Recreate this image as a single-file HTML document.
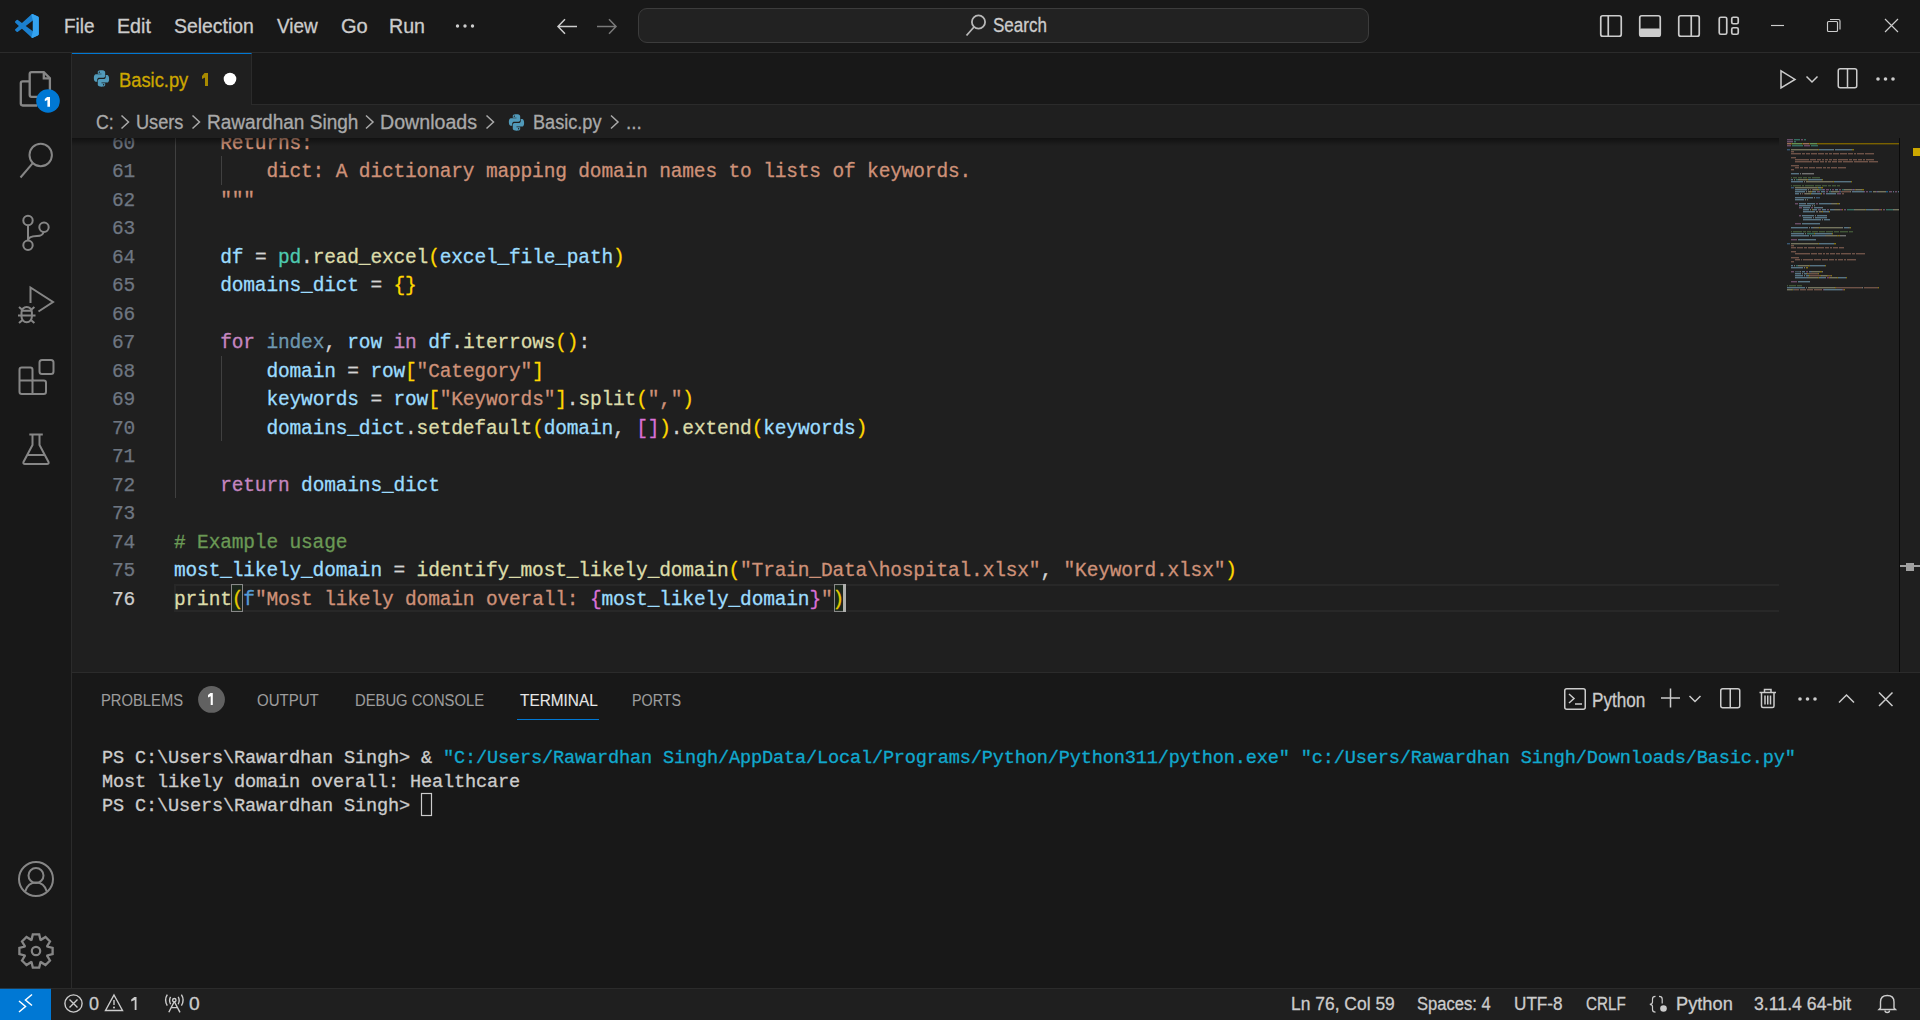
<!DOCTYPE html>
<html><head><meta charset="utf-8"><style>
*{box-sizing:border-box;margin:0;padding:0}
html,body{width:1920px;height:1020px;overflow:hidden;background:#181818}
body{position:relative;font-family:"Liberation Sans", sans-serif}
.abs{position:absolute}
.t{position:absolute;white-space:pre;line-height:1;font-family:"Liberation Sans", sans-serif;transform-origin:0 0;-webkit-text-stroke:0.3px currentColor}
.m{position:absolute;white-space:pre;line-height:normal;font-family:"Liberation Mono", monospace;-webkit-text-stroke:0.3px currentColor}
.ov{position:absolute;left:0;top:0}
#code{position:absolute;left:72px;top:138px;width:1827px;height:534px;overflow:hidden;background:#1F1F1F}
#code .ln{-webkit-text-stroke:0.3px currentColor;position:absolute;left:102px;height:28.5px;white-space:pre;font-family:"Liberation Mono", monospace;font-size:19.5px;letter-spacing:-0.15px;line-height:28.5px;margin-top:2.4px}
#code .num{-webkit-text-stroke:0.25px currentColor;position:absolute;left:0;width:63px;text-align:right;white-space:pre;font-family:"Liberation Mono", monospace;font-size:19.5px;letter-spacing:-0.15px;line-height:28.5px;margin-top:2.4px}
#mm{position:absolute;left:1787px;top:139px;width:112px;height:160px}
#mm i{position:absolute;height:2px;opacity:0.45}
</style></head><body>
<!-- title bar -->
<div class="abs" style="left:0;top:0;width:1920px;height:53px;background:#181818;border-bottom:1px solid #2B2B2B"></div>
<!-- activity bar -->
<div class="abs" style="left:0;top:53px;width:72px;height:935px;background:#181818;border-right:1px solid #2B2B2B"></div>
<!-- tabs bar -->
<div class="abs" style="left:72px;top:53px;width:1848px;height:52px;background:#181818;border-bottom:1px solid #2B2B2B"></div>
<div class="abs" style="left:72px;top:53px;width:180px;height:52px;background:#1F1F1F;border-right:1px solid #2B2B2B;border-top:1px solid #0078D4"></div>
<!-- breadcrumbs -->
<div class="abs" style="left:72px;top:105px;width:1848px;height:33px;background:#1F1F1F"></div>
<!-- editor -->
<div id="code">
 <div class="abs" style="left:102px;top:445.5px;width:1750px;height:28.5px;border:2px solid #282828"></div>
 <div class="abs" style="left:103px;top:0;width:1px;height:360px;background:#404040"></div>
 <div class="abs" style="left:149px;top:18px;width:1px;height:28.5px;background:#404040"></div>
 <div class="abs" style="left:149px;top:217.5px;width:1px;height:85.5px;background:#404040"></div>
 <div class="ln" style="top:-10.5px"><span style="color:#CE9178">    Returns:</span></div><div class="num" style="top:-10.5px;color:#6E7681">60</div><div class="ln" style="top:18.0px"><span style="color:#CE9178">        dict: A dictionary mapping domain names to lists of keywords.</span></div><div class="num" style="top:18.0px;color:#6E7681">61</div><div class="ln" style="top:46.5px"><span style="color:#CE9178">    """</span></div><div class="num" style="top:46.5px;color:#6E7681">62</div><div class="ln" style="top:75.0px"></div><div class="num" style="top:75.0px;color:#6E7681">63</div><div class="ln" style="top:103.5px"><span style="color:#D4D4D4">    </span><span style="color:#9CDCFE">df</span><span style="color:#D4D4D4"> = </span><span style="color:#4EC9B0">pd</span><span style="color:#D4D4D4">.</span><span style="color:#DCDCAA">read_excel</span><span style="color:#FFD700">(</span><span style="color:#9CDCFE">excel_file_path</span><span style="color:#FFD700">)</span></div><div class="num" style="top:103.5px;color:#6E7681">64</div><div class="ln" style="top:132.0px"><span style="color:#D4D4D4">    </span><span style="color:#9CDCFE">domains_dict</span><span style="color:#D4D4D4"> = </span><span style="color:#FFD700">{}</span></div><div class="num" style="top:132.0px;color:#6E7681">65</div><div class="ln" style="top:160.5px"></div><div class="num" style="top:160.5px;color:#6E7681">66</div><div class="ln" style="top:189.0px"><span style="color:#D4D4D4">    </span><span style="color:#C586C0">for</span><span style="color:#D4D4D4"> </span><span style="color:rgba(156,220,254,0.6)">index</span><span style="color:#D4D4D4">, </span><span style="color:#9CDCFE">row</span><span style="color:#D4D4D4"> </span><span style="color:#C586C0">in</span><span style="color:#D4D4D4"> </span><span style="color:#9CDCFE">df</span><span style="color:#D4D4D4">.</span><span style="color:#DCDCAA">iterrows</span><span style="color:#FFD700">()</span><span style="color:#D4D4D4">:</span></div><div class="num" style="top:189.0px;color:#6E7681">67</div><div class="ln" style="top:217.5px"><span style="color:#D4D4D4">        </span><span style="color:#9CDCFE">domain</span><span style="color:#D4D4D4"> = </span><span style="color:#9CDCFE">row</span><span style="color:#FFD700">[</span><span style="color:#CE9178">"Category"</span><span style="color:#FFD700">]</span></div><div class="num" style="top:217.5px;color:#6E7681">68</div><div class="ln" style="top:246.0px"><span style="color:#D4D4D4">        </span><span style="color:#9CDCFE">keywords</span><span style="color:#D4D4D4"> = </span><span style="color:#9CDCFE">row</span><span style="color:#FFD700">[</span><span style="color:#CE9178">"Keywords"</span><span style="color:#FFD700">]</span><span style="color:#D4D4D4">.</span><span style="color:#DCDCAA">split</span><span style="color:#FFD700">(</span><span style="color:#CE9178">","</span><span style="color:#FFD700">)</span></div><div class="num" style="top:246.0px;color:#6E7681">69</div><div class="ln" style="top:274.5px"><span style="color:#D4D4D4">        </span><span style="color:#9CDCFE">domains_dict</span><span style="color:#D4D4D4">.</span><span style="color:#DCDCAA">setdefault</span><span style="color:#FFD700">(</span><span style="color:#9CDCFE">domain</span><span style="color:#D4D4D4">, </span><span style="color:#DA70D6">[]</span><span style="color:#FFD700">)</span><span style="color:#D4D4D4">.</span><span style="color:#DCDCAA">extend</span><span style="color:#FFD700">(</span><span style="color:#9CDCFE">keywords</span><span style="color:#FFD700">)</span></div><div class="num" style="top:274.5px;color:#6E7681">70</div><div class="ln" style="top:303.0px"></div><div class="num" style="top:303.0px;color:#6E7681">71</div><div class="ln" style="top:331.5px"><span style="color:#D4D4D4">    </span><span style="color:#C586C0">return</span><span style="color:#D4D4D4"> </span><span style="color:#9CDCFE">domains_dict</span></div><div class="num" style="top:331.5px;color:#6E7681">72</div><div class="ln" style="top:360.0px"></div><div class="num" style="top:360.0px;color:#6E7681">73</div><div class="ln" style="top:388.5px"><span style="color:#6A9955"># Example usage</span></div><div class="num" style="top:388.5px;color:#6E7681">74</div><div class="ln" style="top:417.0px"><span style="color:#9CDCFE">most_likely_domain</span><span style="color:#D4D4D4"> = </span><span style="color:#DCDCAA">identify_most_likely_domain</span><span style="color:#FFD700">(</span><span style="color:#CE9178">"Train_Data\hospital.xlsx"</span><span style="color:#D4D4D4">, </span><span style="color:#CE9178">"Keyword.xlsx"</span><span style="color:#FFD700">)</span></div><div class="num" style="top:417.0px;color:#6E7681">75</div><div class="ln" style="top:445.5px"><span style="color:#DCDCAA">print</span><span style="color:#FFD700">(</span><span style="color:#569CD6">f</span><span style="color:#CE9178">"Most likely domain overall: </span><span style="color:#DA70D6">{</span><span style="color:#9CDCFE">most_likely_domain</span><span style="color:#DA70D6">}</span><span style="color:#CE9178">"</span><span style="color:#FFD700">)</span></div><div class="num" style="top:445.5px;color:#CCCCCC">76</div>
 <div class="abs" style="left:159px;top:446px;width:12px;height:27.5px;border:1px solid #888888;background:rgba(0,100,0,0.1)"></div>
 <div class="abs" style="left:761.5px;top:446px;width:12px;height:27.5px;border:1px solid #888888;background:rgba(0,100,0,0.1)"></div>
 <div class="abs" style="left:771px;top:446px;width:2.5px;height:27.5px;background:#AEAFAD"></div>
 <div class="abs" style="left:0;top:0;width:1707px;height:8px;background:linear-gradient(rgba(0,0,0,0.45),rgba(0,0,0,0))"></div>
 <div class="abs" style="left:1827px;top:0;width:1px;height:534px;background:#0A0A0A"></div>
</div>
<div class="abs" style="left:1899px;top:138px;width:1px;height:534px;background:#0A0A0A"></div>
<div class="abs" style="left:1900px;top:138px;width:20px;height:534px;background:#1F1F1F"></div>
<div class="abs" style="left:1913px;top:148px;width:7px;height:8px;background:#CCA700"></div>
<div class="abs" style="left:1900px;top:565px;width:20px;height:2px;background:#A0A0A0"></div>
<div class="abs" style="left:1906px;top:563px;width:8px;height:8px;background:#A0A0A0"></div>
<div class="abs" style="left:1779px;top:138px;width:120px;height:534px;background:#1F1F1F"></div>
<div id="mm">
 <div class="abs" style="left:0;top:3.5px;width:112px;height:2px;background:#7A6200"></div>
 <i style="left:0px;top:0px;width:6px;background:#C586C0"></i><i style="left:7px;top:0px;width:6px;background:#4EC9B0"></i><i style="left:14px;top:0px;width:2px;background:#C586C0"></i><i style="left:17px;top:0px;width:2px;background:#4EC9B0"></i><i style="left:0px;top:2px;width:6px;background:#C586C0"></i><i style="left:7px;top:2px;width:2px;background:#4EC9B0"></i><i style="left:0px;top:4px;width:4px;background:#C586C0"></i><i style="left:5px;top:4px;width:10px;background:#4EC9B0"></i><i style="left:16px;top:4px;width:6px;background:#C586C0"></i><i style="left:23px;top:4px;width:7px;background:#4EC9B0"></i><i style="left:0px;top:6px;width:4px;background:#C586C0"></i><i style="left:5px;top:6px;width:11px;background:#4EC9B0"></i><i style="left:17px;top:6px;width:6px;background:#C586C0"></i><i style="left:24px;top:6px;width:7px;background:#4EC9B0"></i><i style="left:0px;top:10px;width:3px;background:#569CD6"></i><i style="left:4px;top:10px;width:27px;background:#DCDCAA"></i><i style="left:31px;top:10px;width:1px;background:#FFD700"></i><i style="left:32px;top:10px;width:14px;background:#9CDCFE"></i><i style="left:46px;top:10px;width:1px;background:#D4D4D4"></i><i style="left:48px;top:10px;width:17px;background:#9CDCFE"></i><i style="left:65px;top:10px;width:2px;background:#FFD700"></i><i style="left:4px;top:12px;width:3px;background:#CE9178"></i><i style="left:4px;top:14px;width:10px;background:#CE9178"></i><i style="left:15px;top:14px;width:3px;background:#CE9178"></i><i style="left:19px;top:14px;width:4px;background:#CE9178"></i><i style="left:24px;top:14px;width:6px;background:#CE9178"></i><i style="left:31px;top:14px;width:6px;background:#CE9178"></i><i style="left:38px;top:14px;width:3px;background:#CE9178"></i><i style="left:42px;top:14px;width:3px;background:#CE9178"></i><i style="left:46px;top:14px;width:6px;background:#CE9178"></i><i style="left:53px;top:14px;width:7px;background:#CE9178"></i><i style="left:61px;top:14px;width:5px;background:#CE9178"></i><i style="left:67px;top:14px;width:2px;background:#CE9178"></i><i style="left:70px;top:14px;width:7px;background:#CE9178"></i><i style="left:78px;top:14px;width:9px;background:#CE9178"></i><i style="left:4px;top:18px;width:5px;background:#CE9178"></i><i style="left:8px;top:20px;width:14px;background:#CE9178"></i><i style="left:23px;top:20px;width:6px;background:#CE9178"></i><i style="left:30px;top:20px;width:4px;background:#CE9178"></i><i style="left:35px;top:20px;width:2px;background:#CE9178"></i><i style="left:38px;top:20px;width:3px;background:#CE9178"></i><i style="left:42px;top:20px;width:3px;background:#CE9178"></i><i style="left:46px;top:20px;width:4px;background:#CE9178"></i><i style="left:51px;top:20px;width:10px;background:#CE9178"></i><i style="left:62px;top:20px;width:3px;background:#CE9178"></i><i style="left:66px;top:20px;width:4px;background:#CE9178"></i><i style="left:71px;top:20px;width:4px;background:#CE9178"></i><i style="left:76px;top:20px;width:2px;background:#CE9178"></i><i style="left:79px;top:20px;width:8px;background:#CE9178"></i><i style="left:8px;top:22px;width:17px;background:#CE9178"></i><i style="left:26px;top:22px;width:6px;background:#CE9178"></i><i style="left:33px;top:22px;width:4px;background:#CE9178"></i><i style="left:38px;top:22px;width:2px;background:#CE9178"></i><i style="left:41px;top:22px;width:3px;background:#CE9178"></i><i style="left:45px;top:22px;width:5px;background:#CE9178"></i><i style="left:51px;top:22px;width:4px;background:#CE9178"></i><i style="left:56px;top:22px;width:10px;background:#CE9178"></i><i style="left:67px;top:22px;width:14px;background:#CE9178"></i><i style="left:82px;top:22px;width:9px;background:#CE9178"></i><i style="left:4px;top:26px;width:8px;background:#CE9178"></i><i style="left:8px;top:28px;width:4px;background:#CE9178"></i><i style="left:13px;top:28px;width:3px;background:#CE9178"></i><i style="left:17px;top:28px;width:4px;background:#CE9178"></i><i style="left:22px;top:28px;width:6px;background:#CE9178"></i><i style="left:29px;top:28px;width:6px;background:#CE9178"></i><i style="left:36px;top:28px;width:3px;background:#CE9178"></i><i style="left:40px;top:28px;width:3px;background:#CE9178"></i><i style="left:44px;top:28px;width:6px;background:#CE9178"></i><i style="left:51px;top:28px;width:8px;background:#CE9178"></i><i style="left:4px;top:30px;width:3px;background:#CE9178"></i><i style="left:4px;top:34px;width:8px;background:#9CDCFE"></i><i style="left:13px;top:34px;width:1px;background:#D4D4D4"></i><i style="left:15px;top:34px;width:12px;background:#D4D4D4"></i><i style="left:4px;top:38px;width:1px;background:#6A9955"></i><i style="left:6px;top:38px;width:4px;background:#6A9955"></i><i style="left:11px;top:38px;width:4px;background:#6A9955"></i><i style="left:16px;top:38px;width:4px;background:#6A9955"></i><i style="left:21px;top:38px;width:3px;background:#6A9955"></i><i style="left:25px;top:38px;width:8px;background:#6A9955"></i><i style="left:4px;top:40px;width:2px;background:#9CDCFE"></i><i style="left:7px;top:40px;width:1px;background:#D4D4D4"></i><i style="left:9px;top:40px;width:2px;background:#4EC9B0"></i><i style="left:11px;top:40px;width:1px;background:#D4D4D4"></i><i style="left:12px;top:40px;width:8px;background:#DCDCAA"></i><i style="left:20px;top:40px;width:1px;background:#FFD700"></i><i style="left:21px;top:40px;width:14px;background:#9CDCFE"></i><i style="left:35px;top:40px;width:1px;background:#FFD700"></i><i style="left:4px;top:42px;width:12px;background:#9CDCFE"></i><i style="left:17px;top:42px;width:1px;background:#D4D4D4"></i><i style="left:19px;top:42px;width:27px;background:#DCDCAA"></i><i style="left:46px;top:42px;width:1px;background:#FFD700"></i><i style="left:47px;top:42px;width:17px;background:#9CDCFE"></i><i style="left:64px;top:42px;width:1px;background:#FFD700"></i><i style="left:4px;top:46px;width:1px;background:#6A9955"></i><i style="left:6px;top:46px;width:8px;background:#6A9955"></i><i style="left:15px;top:46px;width:2px;background:#6A9955"></i><i style="left:18px;top:46px;width:9px;background:#6A9955"></i><i style="left:28px;top:46px;width:6px;background:#6A9955"></i><i style="left:35px;top:46px;width:5px;background:#6A9955"></i><i style="left:41px;top:46px;width:3px;background:#6A9955"></i><i style="left:45px;top:46px;width:4px;background:#6A9955"></i><i style="left:50px;top:46px;width:3px;background:#6A9955"></i><i style="left:4px;top:48px;width:3px;background:#569CD6"></i><i style="left:8px;top:48px;width:22px;background:#DCDCAA"></i><i style="left:30px;top:48px;width:1px;background:#FFD700"></i><i style="left:31px;top:48px;width:3px;background:#9CDCFE"></i><i style="left:34px;top:48px;width:2px;background:#FFD700"></i><i style="left:8px;top:50px;width:12px;background:#9CDCFE"></i><i style="left:21px;top:50px;width:1px;background:#D4D4D4"></i><i style="left:23px;top:50px;width:1px;background:#CE9178"></i><i style="left:25px;top:50px;width:1px;background:#CE9178"></i><i style="left:26px;top:50px;width:1px;background:#D4D4D4"></i><i style="left:27px;top:50px;width:4px;background:#DCDCAA"></i><i style="left:31px;top:50px;width:1px;background:#FFD700"></i><i style="left:32px;top:50px;width:3px;background:#4EC9B0"></i><i style="left:35px;top:50px;width:1px;background:#DA70D6"></i><i style="left:36px;top:50px;width:1px;background:#9CDCFE"></i><i style="left:37px;top:50px;width:1px;background:#DA70D6"></i><i style="left:39px;top:50px;width:3px;background:#C586C0"></i><i style="left:43px;top:50px;width:1px;background:#9CDCFE"></i><i style="left:45px;top:50px;width:2px;background:#C586C0"></i><i style="left:48px;top:50px;width:3px;background:#9CDCFE"></i><i style="left:52px;top:50px;width:2px;background:#C586C0"></i><i style="left:55px;top:50px;width:2px;background:#4EC9B0"></i><i style="left:57px;top:50px;width:1px;background:#D4D4D4"></i><i style="left:58px;top:50px;width:7px;background:#DCDCAA"></i><i style="left:65px;top:50px;width:1px;background:#DA70D6"></i><i style="left:66px;top:50px;width:1px;background:#9CDCFE"></i><i style="left:67px;top:50px;width:1px;background:#DA70D6"></i><i style="left:68px;top:50px;width:1px;background:#FFD700"></i><i style="left:69px;top:50px;width:1px;background:#D4D4D4"></i><i style="left:70px;top:50px;width:5px;background:#DCDCAA"></i><i style="left:75px;top:50px;width:2px;background:#FFD700"></i><i style="left:8px;top:52px;width:10px;background:#9CDCFE"></i><i style="left:19px;top:52px;width:1px;background:#D4D4D4"></i><i style="left:21px;top:52px;width:3px;background:#DCDCAA"></i><i style="left:24px;top:52px;width:1px;background:#FFD700"></i><i style="left:25px;top:52px;width:4px;background:#9CDCFE"></i><i style="left:30px;top:52px;width:3px;background:#C586C0"></i><i style="left:34px;top:52px;width:4px;background:#9CDCFE"></i><i style="left:39px;top:52px;width:2px;background:#C586C0"></i><i style="left:42px;top:52px;width:2px;background:#4EC9B0"></i><i style="left:44px;top:52px;width:1px;background:#D4D4D4"></i><i style="left:45px;top:52px;width:7px;background:#DCDCAA"></i><i style="left:52px;top:52px;width:1px;background:#DA70D6"></i><i style="left:53px;top:52px;width:1px;background:#569CD6"></i><i style="left:54px;top:52px;width:9px;background:#CE9178"></i><i style="left:63px;top:52px;width:1px;background:#D4D4D4"></i><i style="left:65px;top:52px;width:12px;background:#9CDCFE"></i><i style="left:77px;top:52px;width:1px;background:#DA70D6"></i><i style="left:79px;top:52px;width:2px;background:#C586C0"></i><i style="left:82px;top:52px;width:3px;background:#569CD6"></i><i style="left:86px;top:52px;width:3px;background:#DCDCAA"></i><i style="left:89px;top:52px;width:1px;background:#DA70D6"></i><i style="left:90px;top:52px;width:1px;background:#9CDCFE"></i><i style="left:91px;top:52px;width:1px;background:#D4D4D4"></i><i style="left:92px;top:52px;width:7px;background:#DCDCAA"></i><i style="left:99px;top:52px;width:2px;background:#179FFF"></i><i style="left:102px;top:52px;width:3px;background:#C586C0"></i><i style="left:106px;top:52px;width:1px;background:#9CDCFE"></i><i style="left:108px;top:52px;width:2px;background:#C586C0"></i><i style="left:111px;top:52px;width:1px;background:#9CDCFE"></i><i style="left:8px;top:54px;width:4px;background:#9CDCFE"></i><i style="left:13px;top:54px;width:1px;background:#D4D4D4"></i><i style="left:15px;top:54px;width:1px;background:#CE9178"></i><i style="left:17px;top:54px;width:1px;background:#CE9178"></i><i style="left:18px;top:54px;width:1px;background:#D4D4D4"></i><i style="left:19px;top:54px;width:4px;background:#DCDCAA"></i><i style="left:23px;top:54px;width:1px;background:#FFD700"></i><i style="left:24px;top:54px;width:10px;background:#9CDCFE"></i><i style="left:34px;top:54px;width:1px;background:#FFD700"></i><i style="left:36px;top:54px;width:2px;background:#C586C0"></i><i style="left:39px;top:54px;width:10px;background:#9CDCFE"></i><i style="left:50px;top:54px;width:4px;background:#C586C0"></i><i style="left:55px;top:54px;width:2px;background:#CE9178"></i><i style="left:8px;top:58px;width:18px;background:#9CDCFE"></i><i style="left:27px;top:58px;width:1px;background:#D4D4D4"></i><i style="left:29px;top:58px;width:4px;background:#569CD6"></i><i style="left:8px;top:60px;width:9px;background:#9CDCFE"></i><i style="left:18px;top:60px;width:1px;background:#D4D4D4"></i><i style="left:20px;top:60px;width:1px;background:#B5CEA8"></i><i style="left:8px;top:64px;width:3px;background:#C586C0"></i><i style="left:12px;top:64px;width:6px;background:#9CDCFE"></i><i style="left:18px;top:64px;width:1px;background:#D4D4D4"></i><i style="left:20px;top:64px;width:8px;background:#9CDCFE"></i><i style="left:29px;top:64px;width:2px;background:#C586C0"></i><i style="left:32px;top:64px;width:12px;background:#9CDCFE"></i><i style="left:44px;top:64px;width:1px;background:#D4D4D4"></i><i style="left:45px;top:64px;width:5px;background:#DCDCAA"></i><i style="left:50px;top:64px;width:2px;background:#FFD700"></i><i style="left:52px;top:64px;width:1px;background:#D4D4D4"></i><i style="left:12px;top:66px;width:12px;background:#9CDCFE"></i><i style="left:25px;top:66px;width:1px;background:#D4D4D4"></i><i style="left:27px;top:66px;width:1px;background:#B5CEA8"></i><i style="left:12px;top:68px;width:3px;background:#C586C0"></i><i style="left:16px;top:68px;width:7px;background:#9CDCFE"></i><i style="left:24px;top:68px;width:2px;background:#C586C0"></i><i style="left:27px;top:68px;width:8px;background:#9CDCFE"></i><i style="left:35px;top:68px;width:1px;background:#D4D4D4"></i><i style="left:16px;top:70px;width:6px;background:#9CDCFE"></i><i style="left:23px;top:70px;width:1px;background:#D4D4D4"></i><i style="left:25px;top:70px;width:1px;background:#FFD700"></i><i style="left:26px;top:70px;width:4px;background:#9CDCFE"></i><i style="left:31px;top:70px;width:3px;background:#C586C0"></i><i style="left:35px;top:70px;width:4px;background:#9CDCFE"></i><i style="left:40px;top:70px;width:2px;background:#C586C0"></i><i style="left:43px;top:70px;width:4px;background:#9CDCFE"></i><i style="left:47px;top:70px;width:1px;background:#D4D4D4"></i><i style="left:48px;top:70px;width:5px;background:#DCDCAA"></i><i style="left:53px;top:70px;width:2px;background:#DA70D6"></i><i style="left:55px;top:70px;width:1px;background:#FFD700"></i><i style="left:57px;top:70px;width:2px;background:#C586C0"></i><i style="left:60px;top:70px;width:7px;background:#4EC9B0"></i><i style="left:67px;top:70px;width:1px;background:#D4D4D4"></i><i style="left:68px;top:70px;width:10px;background:#DCDCAA"></i><i style="left:78px;top:70px;width:1px;background:#FFD700"></i><i style="left:79px;top:70px;width:7px;background:#9CDCFE"></i><i style="left:86px;top:70px;width:1px;background:#D4D4D4"></i><i style="left:87px;top:70px;width:5px;background:#DCDCAA"></i><i style="left:92px;top:70px;width:2px;background:#DA70D6"></i><i style="left:94px;top:70px;width:1px;background:#FFD700"></i><i style="left:96px;top:70px;width:2px;background:#C586C0"></i><i style="left:99px;top:70px;width:7px;background:#4EC9B0"></i><i style="left:106px;top:70px;width:1px;background:#D4D4D4"></i><i style="left:107px;top:70px;width:5px;background:#DCDCAA"></i><i style="left:16px;top:72px;width:12px;background:#9CDCFE"></i><i style="left:29px;top:72px;width:2px;background:#D4D4D4"></i><i style="left:32px;top:72px;width:3px;background:#DCDCAA"></i><i style="left:35px;top:72px;width:1px;background:#FFD700"></i><i style="left:36px;top:72px;width:6px;background:#9CDCFE"></i><i style="left:42px;top:72px;width:1px;background:#FFD700"></i><i style="left:12px;top:76px;width:2px;background:#C586C0"></i><i style="left:15px;top:76px;width:12px;background:#9CDCFE"></i><i style="left:28px;top:76px;width:1px;background:#D4D4D4"></i><i style="left:30px;top:76px;width:9px;background:#9CDCFE"></i><i style="left:39px;top:76px;width:1px;background:#D4D4D4"></i><i style="left:16px;top:78px;width:9px;background:#9CDCFE"></i><i style="left:26px;top:78px;width:1px;background:#D4D4D4"></i><i style="left:28px;top:78px;width:12px;background:#9CDCFE"></i><i style="left:16px;top:80px;width:18px;background:#9CDCFE"></i><i style="left:35px;top:80px;width:1px;background:#D4D4D4"></i><i style="left:37px;top:80px;width:6px;background:#9CDCFE"></i><i style="left:8px;top:84px;width:6px;background:#C586C0"></i><i style="left:15px;top:84px;width:18px;background:#9CDCFE"></i><i style="left:4px;top:88px;width:17px;background:#9CDCFE"></i><i style="left:22px;top:88px;width:1px;background:#D4D4D4"></i><i style="left:24px;top:88px;width:2px;background:#9CDCFE"></i><i style="left:26px;top:88px;width:1px;background:#D4D4D4"></i><i style="left:27px;top:88px;width:5px;background:#DCDCAA"></i><i style="left:32px;top:88px;width:1px;background:#FFD700"></i><i style="left:33px;top:88px;width:22px;background:#DCDCAA"></i><i style="left:55px;top:88px;width:1px;background:#D4D4D4"></i><i style="left:57px;top:88px;width:4px;background:#9CDCFE"></i><i style="left:61px;top:88px;width:1px;background:#D4D4D4"></i><i style="left:62px;top:88px;width:1px;background:#B5CEA8"></i><i style="left:63px;top:88px;width:1px;background:#FFD700"></i><i style="left:4px;top:92px;width:1px;background:#6A9955"></i><i style="left:6px;top:92px;width:9px;background:#6A9955"></i><i style="left:16px;top:92px;width:3px;background:#6A9955"></i><i style="left:20px;top:92px;width:4px;background:#6A9955"></i><i style="left:25px;top:92px;width:6px;background:#6A9955"></i><i style="left:32px;top:92px;width:6px;background:#6A9955"></i><i style="left:39px;top:92px;width:7px;background:#6A9955"></i><i style="left:47px;top:92px;width:5px;background:#6A9955"></i><i style="left:53px;top:92px;width:8px;background:#6A9955"></i><i style="left:62px;top:92px;width:4px;background:#6A9955"></i><i style="left:4px;top:94px;width:13px;background:#9CDCFE"></i><i style="left:18px;top:94px;width:1px;background:#D4D4D4"></i><i style="left:20px;top:94px;width:7px;background:#4EC9B0"></i><i style="left:27px;top:94px;width:1px;background:#FFD700"></i><i style="left:28px;top:94px;width:17px;background:#9CDCFE"></i><i style="left:45px;top:94px;width:1px;background:#FFD700"></i><i style="left:4px;top:96px;width:18px;background:#9CDCFE"></i><i style="left:23px;top:96px;width:1px;background:#D4D4D4"></i><i style="left:25px;top:96px;width:13px;background:#9CDCFE"></i><i style="left:38px;top:96px;width:1px;background:#D4D4D4"></i><i style="left:39px;top:96px;width:11px;background:#DCDCAA"></i><i style="left:50px;top:96px;width:1px;background:#FFD700"></i><i style="left:51px;top:96px;width:1px;background:#B5CEA8"></i><i style="left:52px;top:96px;width:1px;background:#FFD700"></i><i style="left:53px;top:96px;width:6px;background:#D4D4D4"></i><i style="left:4px;top:100px;width:6px;background:#C586C0"></i><i style="left:11px;top:100px;width:18px;background:#9CDCFE"></i><i style="left:0px;top:104px;width:3px;background:#569CD6"></i><i style="left:4px;top:104px;width:27px;background:#DCDCAA"></i><i style="left:31px;top:104px;width:1px;background:#FFD700"></i><i style="left:32px;top:104px;width:15px;background:#9CDCFE"></i><i style="left:47px;top:104px;width:2px;background:#FFD700"></i><i style="left:4px;top:106px;width:3px;background:#CE9178"></i><i style="left:4px;top:108px;width:5px;background:#CE9178"></i><i style="left:10px;top:108px;width:6px;background:#CE9178"></i><i style="left:17px;top:108px;width:3px;background:#CE9178"></i><i style="left:21px;top:108px;width:7px;background:#CE9178"></i><i style="left:29px;top:108px;width:8px;background:#CE9178"></i><i style="left:38px;top:108px;width:4px;background:#CE9178"></i><i style="left:43px;top:108px;width:2px;background:#CE9178"></i><i style="left:46px;top:108px;width:5px;background:#CE9178"></i><i style="left:52px;top:108px;width:5px;background:#CE9178"></i><i style="left:4px;top:112px;width:5px;background:#CE9178"></i><i style="left:8px;top:114px;width:15px;background:#CE9178"></i><i style="left:24px;top:114px;width:6px;background:#CE9178"></i><i style="left:31px;top:114px;width:4px;background:#CE9178"></i><i style="left:36px;top:114px;width:2px;background:#CE9178"></i><i style="left:39px;top:114px;width:3px;background:#CE9178"></i><i style="left:43px;top:114px;width:5px;background:#CE9178"></i><i style="left:49px;top:114px;width:4px;background:#CE9178"></i><i style="left:54px;top:114px;width:10px;background:#CE9178"></i><i style="left:65px;top:114px;width:3px;background:#CE9178"></i><i style="left:69px;top:114px;width:9px;background:#CE9178"></i><i style="left:4px;top:118px;width:8px;background:#CE9178"></i><i style="left:8px;top:120px;width:5px;background:#CE9178"></i><i style="left:14px;top:120px;width:1px;background:#CE9178"></i><i style="left:16px;top:120px;width:10px;background:#CE9178"></i><i style="left:27px;top:120px;width:7px;background:#CE9178"></i><i style="left:35px;top:120px;width:6px;background:#CE9178"></i><i style="left:42px;top:120px;width:5px;background:#CE9178"></i><i style="left:48px;top:120px;width:2px;background:#CE9178"></i><i style="left:51px;top:120px;width:5px;background:#CE9178"></i><i style="left:57px;top:120px;width:2px;background:#CE9178"></i><i style="left:60px;top:120px;width:9px;background:#CE9178"></i><i style="left:4px;top:122px;width:3px;background:#CE9178"></i><i style="left:4px;top:126px;width:2px;background:#9CDCFE"></i><i style="left:7px;top:126px;width:1px;background:#D4D4D4"></i><i style="left:9px;top:126px;width:2px;background:#4EC9B0"></i><i style="left:11px;top:126px;width:1px;background:#D4D4D4"></i><i style="left:12px;top:126px;width:10px;background:#DCDCAA"></i><i style="left:22px;top:126px;width:1px;background:#FFD700"></i><i style="left:23px;top:126px;width:15px;background:#9CDCFE"></i><i style="left:38px;top:126px;width:1px;background:#FFD700"></i><i style="left:4px;top:128px;width:12px;background:#9CDCFE"></i><i style="left:17px;top:128px;width:1px;background:#D4D4D4"></i><i style="left:19px;top:128px;width:2px;background:#FFD700"></i><i style="left:4px;top:132px;width:3px;background:#C586C0"></i><i style="left:8px;top:132px;width:5px;background:rgba(156,220,254,0.6)"></i><i style="left:13px;top:132px;width:1px;background:#D4D4D4"></i><i style="left:15px;top:132px;width:3px;background:#9CDCFE"></i><i style="left:19px;top:132px;width:2px;background:#C586C0"></i><i style="left:22px;top:132px;width:2px;background:#9CDCFE"></i><i style="left:24px;top:132px;width:1px;background:#D4D4D4"></i><i style="left:25px;top:132px;width:8px;background:#DCDCAA"></i><i style="left:33px;top:132px;width:2px;background:#FFD700"></i><i style="left:35px;top:132px;width:1px;background:#D4D4D4"></i><i style="left:8px;top:134px;width:6px;background:#9CDCFE"></i><i style="left:15px;top:134px;width:1px;background:#D4D4D4"></i><i style="left:17px;top:134px;width:3px;background:#9CDCFE"></i><i style="left:20px;top:134px;width:1px;background:#FFD700"></i><i style="left:21px;top:134px;width:10px;background:#CE9178"></i><i style="left:31px;top:134px;width:1px;background:#FFD700"></i><i style="left:8px;top:136px;width:8px;background:#9CDCFE"></i><i style="left:17px;top:136px;width:1px;background:#D4D4D4"></i><i style="left:19px;top:136px;width:3px;background:#9CDCFE"></i><i style="left:22px;top:136px;width:1px;background:#FFD700"></i><i style="left:23px;top:136px;width:10px;background:#CE9178"></i><i style="left:33px;top:136px;width:1px;background:#FFD700"></i><i style="left:34px;top:136px;width:1px;background:#D4D4D4"></i><i style="left:35px;top:136px;width:5px;background:#DCDCAA"></i><i style="left:40px;top:136px;width:1px;background:#FFD700"></i><i style="left:41px;top:136px;width:3px;background:#CE9178"></i><i style="left:44px;top:136px;width:1px;background:#FFD700"></i><i style="left:8px;top:138px;width:12px;background:#9CDCFE"></i><i style="left:20px;top:138px;width:1px;background:#D4D4D4"></i><i style="left:21px;top:138px;width:10px;background:#DCDCAA"></i><i style="left:31px;top:138px;width:1px;background:#FFD700"></i><i style="left:32px;top:138px;width:6px;background:#9CDCFE"></i><i style="left:38px;top:138px;width:1px;background:#D4D4D4"></i><i style="left:40px;top:138px;width:2px;background:#DA70D6"></i><i style="left:42px;top:138px;width:1px;background:#FFD700"></i><i style="left:43px;top:138px;width:1px;background:#D4D4D4"></i><i style="left:44px;top:138px;width:6px;background:#DCDCAA"></i><i style="left:50px;top:138px;width:1px;background:#FFD700"></i><i style="left:51px;top:138px;width:8px;background:#9CDCFE"></i><i style="left:59px;top:138px;width:1px;background:#FFD700"></i><i style="left:4px;top:142px;width:6px;background:#C586C0"></i><i style="left:11px;top:142px;width:12px;background:#9CDCFE"></i><i style="left:0px;top:146px;width:1px;background:#6A9955"></i><i style="left:2px;top:146px;width:7px;background:#6A9955"></i><i style="left:10px;top:146px;width:5px;background:#6A9955"></i><i style="left:0px;top:148px;width:18px;background:#9CDCFE"></i><i style="left:19px;top:148px;width:1px;background:#D4D4D4"></i><i style="left:21px;top:148px;width:27px;background:#DCDCAA"></i><i style="left:48px;top:148px;width:1px;background:#FFD700"></i><i style="left:49px;top:148px;width:26px;background:#CE9178"></i><i style="left:75px;top:148px;width:1px;background:#D4D4D4"></i><i style="left:77px;top:148px;width:14px;background:#CE9178"></i><i style="left:91px;top:148px;width:1px;background:#FFD700"></i><i style="left:0px;top:150px;width:5px;background:#DCDCAA"></i><i style="left:5px;top:150px;width:1px;background:#FFD700"></i><i style="left:6px;top:150px;width:1px;background:#569CD6"></i><i style="left:7px;top:150px;width:5px;background:#CE9178"></i><i style="left:13px;top:150px;width:6px;background:#CE9178"></i><i style="left:20px;top:150px;width:6px;background:#CE9178"></i><i style="left:27px;top:150px;width:8px;background:#CE9178"></i><i style="left:36px;top:150px;width:1px;background:#DA70D6"></i><i style="left:37px;top:150px;width:18px;background:#9CDCFE"></i><i style="left:55px;top:150px;width:1px;background:#DA70D6"></i><i style="left:56px;top:150px;width:1px;background:#CE9178"></i><i style="left:57px;top:150px;width:1px;background:#FFD700"></i>
 <div class="abs" style="left:0;top:0;width:112px;height:152px;background:repeating-linear-gradient(to bottom,rgba(31,31,31,0) 0 1px,rgba(31,31,31,0.6) 1px 2px)"></div>
</div>
<!-- panel -->
<div class="abs" style="left:72px;top:672px;width:1848px;height:316px;background:#181818;border-top:1px solid #2B2B2B"></div>
<div class="abs" style="left:517px;top:718.5px;width:82px;height:1.5px;background:#0078D4"></div>
<!-- status bar -->
<div class="abs" style="left:0;top:987.5px;width:1920px;height:32.5px;background:#1F1F1F;border-top:1.2px solid #2B2B2B"></div>

<svg class="ov" width="1920" height="1020" viewBox="0 0 1920 1020" fill="none" stroke-linecap="butt" stroke-linejoin="miter">
 <!-- VS Code logo -->
 <g transform="translate(15,14) scale(0.238)">
  <path fill="#1B80CF" d="M96.46 10.8 75.86.87a6.23 6.23 0 0 0-7.11 1.21L29.3 38.07 12.12 25a4.16 4.16 0 0 0-5.32.24L1.3 30.26a4.17 4.17 0 0 0 0 6.16L16.2 50 1.3 63.58a4.17 4.17 0 0 0 0 6.16l5.5 5a4.16 4.16 0 0 0 5.32.24l17.18-13.07 39.45 36a6.23 6.23 0 0 0 7.11 1.2l20.6-9.92a6.25 6.25 0 0 0 3.54-5.63V16.43a6.25 6.25 0 0 0-3.54-5.63zM75 72.7 45.1 50 75 27.3z"/>
  <path fill="#34A3F0" d="M75 27.3V72.7L68.75 98.8a6.23 6.23 0 0 0 7.11 1.2l20.6-9.92A6.25 6.25 0 0 0 100 84.45V16.43a6.25 6.25 0 0 0-3.54-5.63L75.86.87a6.23 6.23 0 0 0-7.11 1.21z"/>
 </g>
 <!-- menu dots -->
 <g fill="#CCCCCC"><circle cx="457.5" cy="26" r="1.7"/><circle cx="465" cy="26" r="1.7"/><circle cx="472.5" cy="26" r="1.7"/></g>
 <!-- nav arrows -->
 <path stroke="#CCCCCC" stroke-width="1.5" d="M558 26.5H577M565 19.2 558 26.5 565 33.8"/>
 <path stroke="#7A7A7A" stroke-width="1.5" d="M597 26.5H616M609 19.2 616 26.5 609 33.8"/>
 <!-- search box -->
 <rect x="638.5" y="8.5" width="730" height="34" rx="8.5" fill="#222222" stroke="#3C3C3C" stroke-width="1"/>
 <circle cx="978.5" cy="22" r="6.6" stroke="#B8B8B8" stroke-width="1.8"/>
 <path stroke="#B8B8B8" stroke-width="1.8" d="M974 27 966.5 35.5"/>
 <!-- layout icons -->
 <g stroke="#CCCCCC" stroke-width="1.7">
  <rect x="1600.75" y="15.75" width="20.5" height="20.5" rx="2"/><path d="M1608.25 16V36"/>
  <rect x="1639.75" y="15.75" width="20.5" height="20.5" rx="2"/>
  <rect x="1678.75" y="15.75" width="20.5" height="20.5" rx="2"/><path d="M1691.25 16V36"/>
  <rect x="1719.25" y="17.25" width="7.5" height="17" rx="1.5"/>
  <rect x="1731.75" y="17.25" width="6.5" height="6.5" rx="1.5"/>
  <rect x="1731.75" y="27.75" width="6.5" height="6.5" rx="1.5"/>
 </g>
 <rect x="1640" y="28.5" width="20" height="7.5" rx="1" fill="#CCCCCC"/>
 <!-- window controls -->
 <g stroke="#CCCCCC" stroke-width="1.15">
  <path d="M1771 25.5H1784"/>
  <rect x="1827.5" y="21.5" width="10" height="10" rx="1"/>
  <path d="M1830 19.5H1838.5Q1840 19.5 1840 21V29.5"/>
  <path d="M1885 19 1898 32M1898 19 1885 32"/>
 </g>

 <!-- Activity bar icons -->
 <g stroke="#868686" stroke-width="2">
  <!-- explorer -->
  <path stroke-width="2.3" d="M29.6 81.3H22.7Q20.8 81.3 20.8 83.2V103.6Q20.8 105.5 22.7 105.5H37"/>
  <path stroke-width="2.3" d="M31.6 72.2H43.8L49.9 78.3V96.8H31.6Q29.7 96.8 29.7 94.9V74.1Q29.7 72.2 31.6 72.2Z"/>
  <path stroke-width="2.3" d="M43.8 72.2V78.3H49.9"/>
  <!-- search -->
  <circle cx="40.7" cy="155" r="11.2"/>
  <path d="M33.2 162.6 20.5 177.5"/>
  <!-- scm -->
  <circle cx="28" cy="220.5" r="4.7"/>
  <circle cx="44" cy="227.3" r="4.7"/>
  <circle cx="28" cy="245.3" r="4.7"/>
  <path d="M28 225.2V240.6"/>
  <path d="M28 241C28 237 31 236 37 236C41 236 43.5 234 43.5 231.5"/>
  <!-- run & debug -->
  <path d="M30.5 303V287.5L53 302 38.5 311.5"/>
  <path d="M21.5 312.5A5.2 5.6 0 0 1 31.9 312.5V316.5A5.2 5.8 0 0 1 21.5 316.5Z"/>
  <path d="M21.8 310.8H31.6M18 315.5H35.5M19 307 22.2 309.8M34.4 307 31.2 309.8M19 323 22.2 320.2M34.4 323 31.2 320.2"/>
  <!-- extensions -->
  <path d="M21.8 367.5H30.2Q32.5 367.5 32.5 369.8V380.5H43.7Q46 380.5 46 382.8V391.7Q46 394 43.7 394H21.8Q19.5 394 19.5 391.7V369.8Q19.5 367.5 21.8 367.5Z"/>
  <path d="M19.5 380.5H32.5V394"/>
  <rect x="39.5" y="360" width="14" height="14" rx="2.5"/>
  <!-- testing -->
  <path d="M29.3 434.5H42.8M32.5 434.5V445L23.5 462Q22.8 464 25 464H47Q49.2 464 48.5 462L39.5 445V434.5M27.5 455H44.5"/>
  <!-- accounts -->
  <circle cx="36" cy="879" r="17"/>
  <circle cx="36" cy="875.5" r="7.5"/>
  <path d="M25.2 891.5C27 885.5 31 882.5 36 882.5S45 885.5 46.8 891.5"/>
 </g>
 <!-- gear -->
 <g transform="translate(36,951)">
  <path stroke="#868686" stroke-width="2.3" d="M-4.41 -11.37 L-3.19 -16.60 L3.19 -16.60 L4.41 -11.37 L4.92 -11.16 L9.48 -13.99 L13.99 -9.48 L11.16 -4.92 L11.37 -4.41 L16.60 -3.19 L16.60 3.19 L11.37 4.41 L11.16 4.92 L13.99 9.48 L9.48 13.99 L4.92 11.16 L4.41 11.37 L3.19 16.60 L-3.19 16.60 L-4.41 11.37 L-4.92 11.16 L-9.48 13.99 L-13.99 9.48 L-11.16 4.92 L-11.37 4.41 L-16.60 3.19 L-16.60 -3.19 L-11.37 -4.41 L-11.16 -4.92 L-13.99 -9.48 L-9.48 -13.99 L-4.92 -11.16Z"/>
  <circle r="4.2" stroke="#868686" stroke-width="2.2"/>
 </g>
 <!-- badge -->
 <circle cx="48" cy="101" r="11.8" fill="#0078D4"/>
 <path fill="#FFFFFF" d="M47.4 97H50V106.8H47.4V100.1L44.8 101.3V98.9L47.1 97Z"/>

 <!-- tab python icon -->
 <g transform="translate(93,70)"><path fill="#519ABA" d="M7.9 0.3C4.3 0.3 4.5 1.9 4.5 1.9V3.6H8V4.1H3.1S0.8 3.8 0.8 7.6C0.8 11.3 2.8 11.2 2.8 11.2H4V9.4S3.9 7.4 6 7.4H9.6S11.5 7.4 11.5 5.5V2.3S11.8 0.3 7.9 0.3ZM6 1.4A0.65 0.65 0 1 1 6 2.7 0.65 0.65 0 1 1 6 1.4Z" transform="scale(1.06)"/>
<path fill="#519ABA" d="M8.1 15.7C11.7 15.7 11.5 14.1 11.5 14.1V12.4H8V11.9H12.9S15.2 12.2 15.2 8.4C15.2 4.7 13.2 4.8 13.2 4.8H12V6.6S12.1 8.6 10 8.6H6.4S4.5 8.6 4.5 10.5V13.7S4.2 15.7 8.1 15.7ZM10 14.6A0.65 0.65 0 1 1 10 13.3 0.65 0.65 0 1 1 10 14.6Z" transform="scale(1.06)"/></g>
 <g transform="translate(508,114)"><path fill="#519ABA" d="M7.9 0.3C4.3 0.3 4.5 1.9 4.5 1.9V3.6H8V4.1H3.1S0.8 3.8 0.8 7.6C0.8 11.3 2.8 11.2 2.8 11.2H4V9.4S3.9 7.4 6 7.4H9.6S11.5 7.4 11.5 5.5V2.3S11.8 0.3 7.9 0.3ZM6 1.4A0.65 0.65 0 1 1 6 2.7 0.65 0.65 0 1 1 6 1.4Z" transform="scale(1.06)"/>
<path fill="#519ABA" d="M8.1 15.7C11.7 15.7 11.5 14.1 11.5 14.1V12.4H8V11.9H12.9S15.2 12.2 15.2 8.4C15.2 4.7 13.2 4.8 13.2 4.8H12V6.6S12.1 8.6 10 8.6H6.4S4.5 8.6 4.5 10.5V13.7S4.2 15.7 8.1 15.7ZM10 14.6A0.65 0.65 0 1 1 10 13.3 0.65 0.65 0 1 1 10 14.6Z" transform="scale(1.06)"/></g>
 <path fill="#A88A00" d="M205 73H208V86H205V77.4L202 78.9V75.9L204.6 73Z"/>
 <!-- dirty dot -->
 <circle cx="230" cy="79" r="6.3" fill="#FFFFFF"/>
 <!-- breadcrumb chevrons -->
 <g stroke="#A9A9A9" stroke-width="1.5">
  <path d="M121.5 115.5 128.5 122 121.5 128.5"/>
  <path d="M192.5 115.5 199.5 122 192.5 128.5"/>
  <path d="M366 115.5 373 122 366 128.5"/>
  <path d="M486.5 115.5 493.5 122 486.5 128.5"/>
  <path d="M611 115.5 618 122 611 128.5"/>
 </g>
 <!-- editor actions -->
 <g stroke="#CCCCCC" stroke-width="1.5">
  <path d="M1781 70.8V88L1795 79.4Z"/>
  <path d="M1806.5 76.5 1812 82 1817.5 76.5"/>
  <rect x="1838.25" y="68.75" width="18.5" height="19" rx="2"/><path d="M1847.5 69V88"/>
 </g>
 <g fill="#CCCCCC"><circle cx="1878" cy="79" r="1.8"/><circle cx="1885.5" cy="79" r="1.8"/><circle cx="1893" cy="79" r="1.8"/></g>

 <!-- panel actions -->
 <g stroke="#CCCCCC" stroke-width="1.5">
  <rect x="1564.75" y="688.75" width="20.5" height="20.5" rx="2"/>
  <path d="M1569 694 1574 698.5 1569 703M1575 704H1582"/>
  <path d="M1670.5 688.5V707.5M1661 698H1680"/>
  <path d="M1689.5 696 1695 701.5 1700.5 696"/>
  <rect x="1720.75" y="688.75" width="19" height="19" rx="2"/><path d="M1730.25 689V708"/>
  <path d="M1759.5 692.5H1776M1764.5 692.5V689.5H1771V692.5M1761.5 692.5V706Q1761.5 707.5 1763 707.5H1772.5Q1774 707.5 1774 706V692.5M1765 695.5V704.5M1767.75 695.5V704.5M1770.5 695.5V704.5"/>
  <path d="M1839 702.5 1846.5 695 1854 702.5"/>
  <path d="M1879 692.5 1892.5 706M1892.5 692.5 1879 706"/>
 </g>
 <g fill="#CCCCCC"><circle cx="1800" cy="699" r="1.8"/><circle cx="1807.5" cy="699" r="1.8"/><circle cx="1815" cy="699" r="1.8"/></g>
 <!-- problems badge -->
 <circle cx="211.5" cy="699.4" r="13.4" fill="#616161"/>
 <path fill="#FFFFFF" d="M210.7 693H212.8V704.9H210.7V696.2L208 697.4V695.1L210.4 693Z"/>
 <!-- terminal cursor -->
 <rect x="421.5" y="793.5" width="10" height="22" stroke="#CCCCCC" stroke-width="1.2"/>

 <!-- status bar -->
 <rect x="0" y="988.8" width="51" height="31.2" fill="#0078D4"/>
 <g stroke="#FFFFFF" stroke-width="1.5">
  <path d="M19 1001 25.5 1006.5 19 1012M32 994.5 25.5 1000 32 1005.5"/>
 </g>
 <g stroke="#CCCCCC" stroke-width="1.4">
  <circle cx="73.5" cy="1003.5" r="8.6"/>
  <path d="M69.5 999.5 77.5 1007.5M77.5 999.5 69.5 1007.5"/>
  <path d="M114 995 122.5 1010.5H105.5Z"/>
  <path d="M114 1000V1005"/>
  <path d="M174.3 1001.5 168.8 1012.3M174.3 1001.5 180 1012.3M171 1007.6H177.6"/>
  <path d="M170.6 996.8Q168.6 1000.3 170.6 1004.2M178.2 996.8Q180.2 1000.3 178.2 1004.2M167.3 994.6Q163.9 1000 167.3 1005.6M181.4 994.6Q184.8 1000 181.4 1005.6"/>
  <circle cx="174.3" cy="1000.2" r="1.7"/>
  <path stroke-width="1.2" d="M1655.5 996.3Q1652.5 996.3 1652.5 999V1002Q1652.5 1004.2 1649.8 1004.3Q1652.5 1004.4 1652.5 1006.6V1009.5Q1652.5 1012.2 1655.5 1012.2"/>
  <path stroke-width="1.2" d="M1659 996.3Q1662.2 996.3 1662.2 999V1003.5"/>
  <path d="M1880.5 1008V1002Q1880.5 995.5 1887.3 995.5Q1894 995.5 1894 1002V1008L1895.5 1009.5H1879Z"/>
  <path d="M1885 1010.5Q1885 1012.5 1887.3 1012.5Q1889.5 1012.5 1889.5 1010.5"/>
 </g>
 <circle cx="114" cy="1007.5" r="1" fill="#CCCCCC"/>
 <path fill="#CCCCCC" d="M134.7 997.1H136.5V1010H134.7V999.9L131.2 1001.4V999.4L134.3 997.1Z"/>
 <circle cx="1663.5" cy="1008.5" r="3.3" fill="#CCCCCC"/>
</svg>

<div class="t" style="left:64.03px;top:17.49px;font-size:19.5px;color:#CCCCCC;transform:scaleX(0.9690)">File</div>
<div class="t" style="left:116.96px;top:17.49px;font-size:19.5px;color:#CCCCCC;transform:scaleX(1.0079)">Edit</div>
<div class="t" style="left:173.83px;top:17.49px;font-size:19.5px;color:#CCCCCC;transform:scaleX(0.9958)">Selection</div>
<div class="t" style="left:276.88px;top:17.49px;font-size:19.5px;color:#CCCCCC;transform:scaleX(0.9733)">View</div>
<div class="t" style="left:340.87px;top:17.49px;font-size:19.5px;color:#CCCCCC;transform:scaleX(1.0280)">Go</div>
<div class="t" style="left:389.37px;top:17.49px;font-size:19.5px;color:#CCCCCC;transform:scaleX(1.0038)">Run</div>
<div class="t" style="left:992.98px;top:16.49px;font-size:19.5px;color:#CCCCCC;transform:scaleX(0.8745)">Search</div>
<div class="t" style="left:119.47px;top:71.49px;font-size:19.5px;color:#CCA700;transform:scaleX(0.9393)">Basic.py</div>
<div class="t" style="left:95.59px;top:113.29px;font-size:19.5px;color:#A9A9A9;transform:scaleX(0.9075)">C:</div>
<div class="t" style="left:136.30px;top:113.29px;font-size:19.5px;color:#A9A9A9;transform:scaleX(0.9316)">Users</div>
<div class="t" style="left:206.81px;top:113.29px;font-size:19.5px;color:#A9A9A9;transform:scaleX(0.9768)">Rawardhan Singh</div>
<div class="t" style="left:380.37px;top:113.29px;font-size:19.5px;color:#A9A9A9;transform:scaleX(1.0061)">Downloads</div>
<div class="t" style="left:533.49px;top:113.29px;font-size:19.5px;color:#A9A9A9;transform:scaleX(0.9289)">Basic.py</div>
<div class="t" style="left:625.90px;top:113.29px;font-size:19.5px;color:#A9A9A9;transform:scaleX(0.9725)">...</div>
<div class="t" style="left:101.39px;top:692.78px;font-size:16.8px;color:#9D9D9D;transform:scaleX(0.8803);-webkit-text-stroke:0.1px currentColor">PROBLEMS</div>
<div class="t" style="left:257.33px;top:692.78px;font-size:16.8px;color:#9D9D9D;transform:scaleX(0.8945);-webkit-text-stroke:0.1px currentColor">OUTPUT</div>
<div class="t" style="left:354.99px;top:692.78px;font-size:16.8px;color:#9D9D9D;transform:scaleX(0.8812);-webkit-text-stroke:0.1px currentColor">DEBUG CONSOLE</div>
<div class="t" style="left:519.96px;top:692.78px;font-size:16.8px;color:#E7E7E7;transform:scaleX(0.9158);-webkit-text-stroke:0.1px currentColor">TERMINAL</div>
<div class="t" style="left:631.83px;top:692.78px;font-size:16.8px;color:#9D9D9D;transform:scaleX(0.8523);-webkit-text-stroke:0.1px currentColor">PORTS</div>
<div class="t" style="left:1592.17px;top:690.99px;font-size:19.5px;color:#CCCCCC;transform:scaleX(0.8778)">Python</div>
<div class="t" style="left:88.66px;top:994.71px;font-size:18.3px;color:#CCCCCC;transform:scaleX(0.9829)">0</div>
<div class="t" style="left:188.81px;top:994.71px;font-size:18.3px;color:#CCCCCC;transform:scaleX(1.0514)">0</div>
<div class="t" style="left:1290.57px;top:994.71px;font-size:18.3px;color:#CCCCCC;transform:scaleX(0.9545)">Ln 76, Col 59</div>
<div class="t" style="left:1417.21px;top:994.71px;font-size:18.3px;color:#CCCCCC;transform:scaleX(0.9066)">Spaces: 4</div>
<div class="t" style="left:1514.01px;top:994.71px;font-size:18.3px;color:#CCCCCC;transform:scaleX(0.9374)">UTF-8</div>
<div class="t" style="left:1585.97px;top:994.71px;font-size:18.3px;color:#CCCCCC;transform:scaleX(0.8326)">CRLF</div>
<div class="t" style="left:1675.90px;top:994.71px;font-size:18.3px;color:#CCCCCC;transform:scaleX(0.9977)">Python</div>
<div class="t" style="left:1753.67px;top:994.71px;font-size:18.3px;color:#CCCCCC;transform:scaleX(0.9680)">3.11.4 64-bit</div>
<div class="m" style="left:102px;top:747.52px;font-size:18.6px;letter-spacing:-0.16000000000000014px;color:#CCCCCC">PS C:\Users\Rawardhan Singh&gt; &amp; <span style="color:#11A8CD">"C:/Users/Rawardhan Singh/AppData/Local/Programs/Python/Python311/python.exe" "c:/Users/Rawardhan Singh/Downloads/Basic.py"</span></div>
<div class="m" style="left:102px;top:771.52px;font-size:18.6px;letter-spacing:-0.16000000000000014px;color:#CCCCCC">Most likely domain overall: Healthcare</div>
<div class="m" style="left:102px;top:795.52px;font-size:18.6px;letter-spacing:-0.16000000000000014px;color:#CCCCCC">PS C:\Users\Rawardhan Singh&gt;</div>
</body></html>
